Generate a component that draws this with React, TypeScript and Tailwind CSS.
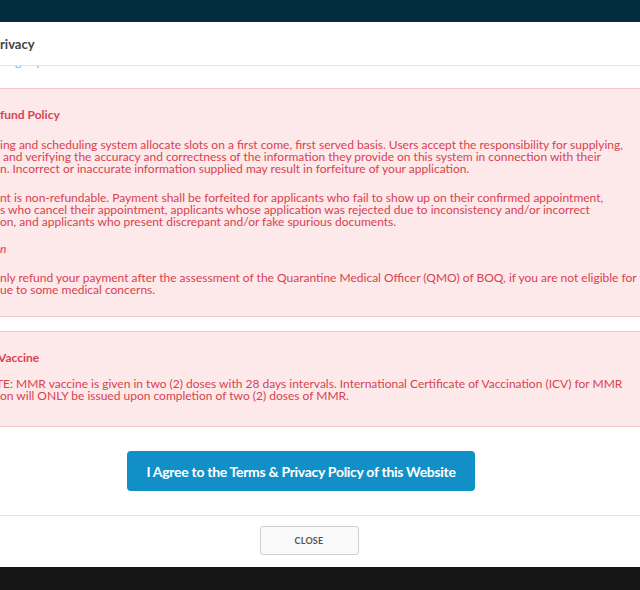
const red = 'text-[#d8434f]';

function Line({ children, className = '' }: { children: React.ReactNode; className?: string }) {
  return <div className={`whitespace-pre leading-[12px] ${className}`}>{children}</div>;
}

export default function App() {
  return (
    <div className="h-[590px] w-[640px] overflow-hidden bg-[#151515] flex flex-col font-['Lato',sans-serif]">
      <div className="h-[22px] shrink-0 bg-[#032d3e]" />

      <div className="h-[545px] shrink-0 bg-white flex flex-col">
        {/* header */}
        <div className="h-[44px] shrink-0 flex items-center border-b border-[#e5e5e5]">
          <h4 className="text-[13px] font-bold text-[#444] mt-[2px]">rivacy</h4>
        </div>

        {/* scrolled body */}
        <div className="h-[449px] shrink-0 overflow-hidden">
          <div className="-mt-[13px] h-[13px] text-[12px] text-[#6fb3d8] whitespace-pre pl-[15px]">g     p</div>

          <div className={`mt-[22px] h-[229px] bg-[#fde8ea] border-y border-[#f1c6cb] ${red} text-[12px] pt-[18px]`}>
            <h5 className="text-[12px] font-bold leading-[16px] mb-[16px]">fund Policy</h5>
            <Line>ing and scheduling system allocate slots on a first come, first served basis. Users accept the responsibility for supplying,</Line>
            <Line> and verifying the accuracy and correctness of the information they provide on this system in connection with their</Line>
            <Line>n. Incorrect or inaccurate information supplied may result in forfeiture of your application.</Line>
            <div className="h-[17px]" />
            <Line>nt is non-refundable. Payment shall be forfeited for applicants who fail to show up on their confirmed appointment,</Line>
            <Line>s who cancel their appointment, applicants whose application was rejected due to inconsistency and/or incorrect</Line>
            <Line>on, and applicants who present discrepant and/or fake spurious documents.</Line>
            <div className="h-[15px]" />
            <Line className="italic">n</Line>
            <div className="h-[17px]" />
            <Line>nly refund your payment after the assessment of the Quarantine Medical Officer (QMO) of BOQ, if you are not eligible for the</Line>
            <Line>ue to some medical concerns.</Line>
          </div>

          <div className={`mt-[14px] h-[96px] bg-[#fde8ea] border-y border-[#f1c6cb] ${red} text-[12px] pt-[18px]`}>
            <h5 className="text-[12px] font-bold leading-[16px] mb-[12px] -ml-[2px]">Vaccine</h5>
            <Line className="-ml-[4px]">TE: MMR vaccine is given in two (2) doses with 28 days intervals. International Certificate of Vaccination (ICV) for MMR</Line>
            <Line>on will ONLY be issued upon completion of two (2) doses of MMR.</Line>
          </div>

          <div className="flex justify-center mt-[24px] pr-[38px]">
            <button className="w-[348px] h-[40px] rounded-[4px] bg-[#1190c8] text-white text-[14px] font-bold tracking-[-0.3px]">
              I Agree to the Terms &amp; Privacy Policy of this Website
            </button>
          </div>
        </div>

        {/* footer */}
        <div className="border-t border-[#e5e5e5] flex justify-center pt-[10px] pr-[22px]">
          <button className="w-[99px] h-[29px] rounded-[3px] border border-[#d0d0d0] bg-[#fafafa] text-[9px] font-bold text-[#555] tracking-[0.2px]">
            CLOSE
          </button>
        </div>
      </div>
    </div>
  );
}
